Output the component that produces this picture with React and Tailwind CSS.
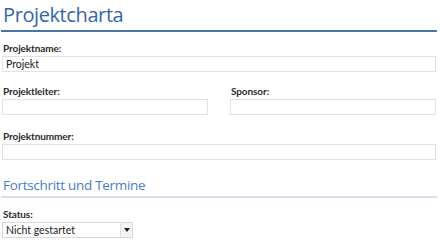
export default function App() {
  const font = { fontFamily: 'Lato, "Open Sans", sans-serif' };

  const Label = ({ children }) => (
    <div className="h-[14px] pl-[1px] text-[10px] font-bold leading-[13px] tracking-[-0.1px] text-[#2b2b2b]">{children}</div>
  );

  const Field = ({ value = '', className = '' }) => (
    <div className={`h-[16px] border border-[#e1e1e1] bg-white px-[3px] text-[10.5px] leading-[14px] text-[#222] ${className}`}>
      {value}
    </div>
  );

  return (
    <div className="w-[441px] h-[244px] bg-white overflow-hidden" style={font}>
      <div className="w-[437px] pl-[1px]">
        <div className="h-[32px] border-b-2 border-[#4a72ad] pl-[2px] pt-[1px]">
          <h1 className="text-[20px] leading-[27px] tracking-[-0.4px] text-[#3565a8]" style={{ fontFamily: '"Open Sans", sans-serif' }}>Projektcharta</h1>
        </div>

        <div className="px-[1px]">
          <div className="mt-[10px]"><Label>Projektname:</Label></div>
          <Field value="Projekt" />

          <div className="mt-[13px] flex gap-[22px]">
            <div className="flex-1">
              <Label>Projektleiter:</Label>
              <Field />
            </div>
            <div className="flex-1">
              <Label>Sponsor:</Label>
              <Field />
            </div>
          </div>

          <div className="mt-[15px]"><Label>Projektnummer:</Label></div>
          <Field />
        </div>

        <div className="mt-[15px] h-[23px] border-b-2 border-[#d5deec] pl-[2px]">
          <h2 className="text-[13.5px] leading-[21px] tracking-[-0.3px] text-[#4a7cc4]" style={{ fontFamily: '"Open Sans", sans-serif' }}>Fortschritt und Termine</h2>
        </div>

        <div className="px-[1px]">
          <div className="mt-[10px]"><Label>Status:</Label></div>
          <div className="flex h-[16px] w-[131px] border border-[#d8d8d8] bg-white text-[10.5px] leading-[14px] text-[#222]">
            <div className="flex-1 px-[3px]">Nicht gestartet</div>
            <div className="flex w-[12px] items-center justify-center border-l border-[#e1e1e1] bg-[#f4f4f4]">
              <svg width="6" height="4" viewBox="0 0 6 4"><path d="M0 0h6L3 4z" fill="#222" /></svg>
            </div>
          </div>
        </div>
      </div>
    </div>
  );
}
